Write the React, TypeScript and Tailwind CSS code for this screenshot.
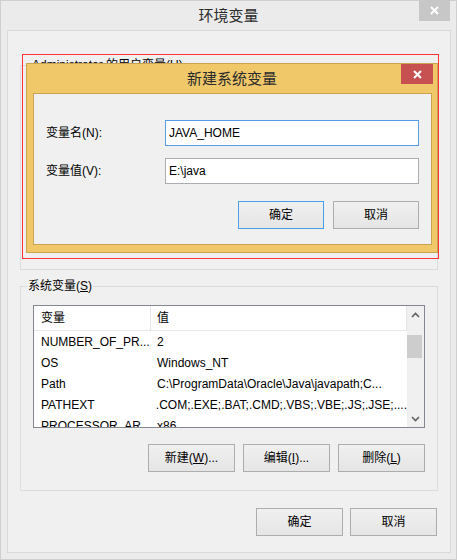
const rows = [
  { name: 'NUMBER_OF_PR...', value: '2' },
  { name: 'OS', value: 'Windows_NT' },
  { name: 'Path', value: 'C:\\ProgramData\\Oracle\\Java\\javapath;C...' },
  { name: 'PATHEXT', value: '.COM;.EXE;.BAT;.CMD;.VBS;.VBE;.JS;.JSE;....' },
  { name: 'PROCESSOR_AR...', value: 'x86' },
];

function Btn({ children, w = 'w-[87px]', focused = false }: { children: React.ReactNode; w?: string; focused?: boolean }) {
  return (
    <button
      className={`${w} h-[28px] flex items-center justify-center border bg-linear-to-b from-[#f0f0f0] to-[#e5e5e5] text-black ${
        focused ? 'border-[#4a9ee8]' : 'border-[#adadad]'
      }`}
    >
      {children}
    </button>
  );
}

function Chevron({ down = false }: { down?: boolean }) {
  return (
    <svg width="9" height="6" viewBox="0 0 9 6" className={down ? 'rotate-180' : ''}>
      <polyline points="1,5 4.5,1.5 8,5" fill="none" stroke="#606060" strokeWidth="1.6" />
    </svg>
  );
}

function CloseX({ size = 9 }: { size?: number }) {
  return (
    <svg width={size} height={size} viewBox="0 0 9 9">
      <path d="M1 1L8 8M8 1L1 8" stroke="white" strokeWidth="2" />
    </svg>
  );
}

export default function App() {
  return (
    <div className="relative w-[457px] h-[560px] bg-[#ebebeb] border border-[#cfcfcf] flex flex-col text-[12px] text-black font-['Liberation_Sans','Noto_Sans_CJK_SC',sans-serif]">
      {/* title bar */}
      <div className="relative h-[29px] flex items-center justify-center text-[15px] text-[#2b2b2b] font-['Noto_Sans_CJK_SC',sans-serif]">
        环境变量
        <div className="absolute right-[6px] top-[-1px] w-[31px] h-[21px] bg-[#c7c7c7] flex items-center justify-center">
          <CloseX />
        </div>
      </div>

      {/* client */}
      <div className="ml-[6px] w-[444px] h-[523px] border border-[#d9d9d9] bg-[#f0f0f0] pl-[12px] flex flex-col">
        <div className="relative mt-[34px] w-[418px] h-[205px] border border-[#dcdcdc]">
          <span className="absolute left-[9px] -top-[8px] px-[2px] leading-[15px] bg-[#f0f0f0]">
            Administrator 的用户变量(<span className="underline">U</span>)
          </span>
        </div>

        <div className="relative mt-[16px] w-[418px] h-[205px] border border-[#dcdcdc] pt-[18px] pl-[12px] pr-[12px]">
          <span className="absolute left-[6px] -top-[8px] px-[1px] leading-[15px] bg-[#f0f0f0]">
            系统变量(<span className="underline">S</span>)
          </span>

          <div className="w-[392px] h-[123px] border border-[#828790] bg-white flex overflow-hidden">
            <div className="w-[373px] flex flex-col">
              <div className="h-[25px] flex shrink-0 border-b border-r border-[#e5e5e5]">
                <div className="w-[117px] pl-[7px] flex items-center border-r border-[#e5e5e5]">变量</div>
                <div className="pl-[6px] flex items-center">值</div>
              </div>
              {rows.map((r) => (
                <div key={r.name} className="h-[21px] flex shrink-0 items-center whitespace-nowrap">
                  <div className="w-[117px] pl-[7px]">{r.name}</div>
                  <div className="pl-[6px]">{r.value}</div>
                </div>
              ))}
            </div>
            <div className="w-[17px] bg-[#f0f0f0] flex flex-col">
              <div className="h-[17px] flex items-center justify-center">
                <Chevron />
              </div>
              <div className="flex-1">
                <div className="mt-[12px] w-[15px] h-[23px] bg-[#cdcdcd]" />
              </div>
              <div className="h-[17px] flex items-center justify-center">
                <Chevron down />
              </div>
            </div>
          </div>

          <div className="mt-[16px] flex justify-end gap-[8px]">
            <Btn>
              新建(<span className="underline">W</span>)...
            </Btn>
            <Btn>
              编辑(<span className="underline">I</span>)...
            </Btn>
            <Btn>
              删除(<span className="underline">L</span>)
            </Btn>
          </div>
        </div>

        <div className="mt-[17px] w-[418px] pr-[1px] flex justify-end gap-[7px]">
          <Btn>确定</Btn>
          <Btn>取消</Btn>
        </div>
      </div>

      {/* new system variable dialog */}
      <div className="absolute left-[25px] top-[62px] w-[412px] h-[190px] border border-[#c9a352] bg-[#f0c86a] flex flex-col">
        <div className="relative h-[29px] shrink-0 flex items-center justify-center text-[15px] text-[#2b2b2b] font-['Noto_Sans_CJK_SC',sans-serif]">
          新建系统变量
          <div className="absolute right-[4px] top-0 w-[32px] h-[20px] bg-[#c75050] flex items-center justify-center">
            <CloseX />
          </div>
        </div>
        <div className="ml-[6px] w-[399px] h-[152px] border border-[#c9a352] bg-[#f0f0f0] pt-[26px] px-[12px]">
          <div className="flex items-center h-[26px]">
            <div className="w-[119px]">变量名(N):</div>
            <input
              defaultValue="JAVA_HOME"
              className="w-[254px] h-[26px] border border-[#569de5] bg-white pl-[3px] outline-none"
            />
          </div>
          <div className="mt-[12px] flex items-center h-[26px]">
            <div className="w-[119px]">变量值(V):</div>
            <input
              defaultValue={'E:\\java'}
              className="w-[254px] h-[26px] border border-[#abadb3] bg-white pl-[3px] outline-none"
            />
          </div>
          <div className="mt-[17px] flex justify-end gap-[9px]">
            <Btn w="w-[86px]" focused>
              确定
            </Btn>
            <Btn w="w-[86px]">取消</Btn>
          </div>
        </div>
      </div>

      {/* red annotation frame */}
      <div className="absolute left-[21px] top-[53px] w-[417px] h-[205px] border border-[#ff3434]" />
    </div>
  );
}
